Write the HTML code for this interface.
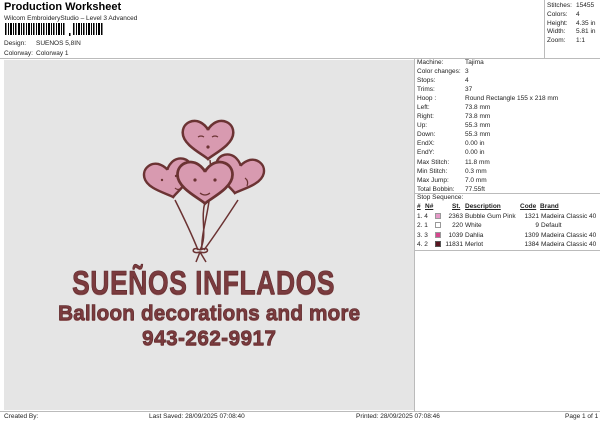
<!DOCTYPE html>
<html><head><meta charset="utf-8"><style>
*{margin:0;padding:0;box-sizing:border-box}
body{width:600px;height:424px;background:#fff;font-family:"Liberation Sans",Arial,sans-serif;font-size:6.5px;color:#222;position:relative;overflow:hidden}
.a{position:absolute;white-space:nowrap}
.big{position:absolute;font-weight:bold;color:#7b3b3e;white-space:nowrap;-webkit-text-stroke:0.6px #5a2a2c;text-shadow:0 1px 0 #a06a6a}
</style></head><body>
<div class="a" style="left:4px;top:1px;font-size:11px;font-weight:bold;color:#000">Production Worksheet</div>
<div class="a" style="left:4px;top:15px;font-size:6.5px">Wilcom EmbroideryStudio – Level 3 Advanced</div>
<svg class="a" style="left:5px;top:23px" width="100" height="14">
<g fill="#000">
<rect x="0" y="0" width="1.5" height="12"/><rect x="3" y="0" width="1" height="12"/><rect x="5" y="0" width="2" height="12"/><rect x="8" y="0" width="1" height="12"/><rect x="10" y="0" width="1.5" height="12"/><rect x="13" y="0" width="2" height="12"/><rect x="16" y="0" width="1" height="12"/><rect x="18" y="0" width="1.5" height="12"/><rect x="21" y="0" width="1" height="12"/><rect x="23" y="0" width="2" height="12"/><rect x="26" y="0" width="1" height="12"/><rect x="28" y="0" width="1.5" height="12"/><rect x="31" y="0" width="1" height="12"/><rect x="33" y="0" width="2" height="12"/><rect x="36" y="0" width="1" height="12"/><rect x="38" y="0" width="1.5" height="12"/><rect x="41" y="0" width="1" height="12"/><rect x="43" y="0" width="2" height="12"/><rect x="46" y="0" width="1" height="12"/><rect x="48" y="0" width="1.5" height="12"/><rect x="51" y="0" width="1" height="12"/><rect x="53" y="0" width="2" height="12"/><rect x="56" y="0" width="1" height="12"/><rect x="58" y="0" width="1.5" height="12"/>
<rect x="64" y="10" width="1.5" height="3"/>
<rect x="68" y="0" width="1.5" height="12"/><rect x="71" y="0" width="1" height="12"/><rect x="73" y="0" width="2" height="12"/><rect x="76" y="0" width="1" height="12"/><rect x="78" y="0" width="1.5" height="12"/><rect x="81" y="0" width="1" height="12"/><rect x="83" y="0" width="2" height="12"/><rect x="86" y="0" width="1" height="12"/><rect x="88" y="0" width="1.5" height="12"/><rect x="91" y="0" width="1" height="12"/><rect x="93" y="0" width="2" height="12"/><rect x="96" y="0" width="1.5" height="12"/>
</g></svg>
<div class="a" style="left:4px;top:40px">Design:</div><div class="a" style="left:36px;top:40px">SUENOS 5,8IN</div>
<div class="a" style="left:4px;top:50px">Colorway:</div><div class="a" style="left:36px;top:50px">Colorway 1</div>
<div class="a" style="left:0;top:58px;width:600px;border-top:1px solid #bbb"></div>
<div class="a" style="left:544px;top:0;height:58px;border-left:1px solid #bbb"></div>
<div class="a" style="left:547px;top:2px;line-height:8.8px">Stitches:<br>Colors:<br>Height:<br>Width:<br>Zoom:</div>
<div class="a" style="left:576px;top:2px;line-height:8.8px">15455<br>4<br>4.35 in<br>5.81 in<br>1:1</div>
<div class="a" style="left:4px;top:60px;width:410px;height:350px;background:#e5e5e5"></div>
<div class="a" style="left:414px;top:58px;height:353px;border-left:1px solid #bbb"></div>
<div class="a" style="left:417px;top:58px;line-height:9.05px">Machine:<br>Color changes:<br>Stops:<br>Trims:<br>Hoop :<br>Left:<br>Right:<br>Up:<br>Down:<br>EndX:<br>EndY:<br>Max Stitch:<br>Min Stitch:<br>Max Jump:<br>Total Bobbin:</div>
<div class="a" style="left:465px;top:58px;line-height:9.05px">Tajima<br>3<br>4<br>37<br>Round Rectangle 155 x 218 mm<br>73.8 mm<br>73.8 mm<br>55.3 mm<br>55.3 mm<br>0.00 in<br>0.00 in<br>11.8 mm<br>0.3 mm<br>7.0 mm<br>77.55ft</div>
<div class="a" style="left:415px;top:193px;width:185px;border-top:1px solid #bbb"></div>
<div class="a" style="left:417px;top:194px">Stop Sequence:</div>
<div class="a" style="left:417px;top:203px;font-weight:bold;text-decoration:underline">#</div>
<div class="a" style="left:425px;top:203px;font-weight:bold;text-decoration:underline">N#</div>
<div class="a" style="left:452px;top:203px;font-weight:bold;text-decoration:underline">St.</div>
<div class="a" style="left:465px;top:203px;font-weight:bold;text-decoration:underline">Description</div>
<div class="a" style="left:520px;top:203px;font-weight:bold;text-decoration:underline">Code</div>
<div class="a" style="left:540px;top:203px;font-weight:bold;text-decoration:underline">Brand</div>
<div class="a" style="left:417px;top:212px;line-height:9.4px">1. 4<br>2. 1<br>3. 3<br>4. 2</div>
<div class="a" style="left:435px;top:213px;width:6px;height:6px;background:#e59ac8;border:1px solid #999"></div>
<div class="a" style="left:435px;top:222px;width:6px;height:6px;background:#fff;border:1px solid #999"></div>
<div class="a" style="left:435px;top:232px;width:6px;height:6px;background:#d5478e;border:1px solid #999"></div>
<div class="a" style="left:435px;top:241px;width:6px;height:6px;background:#5a1622;border:1px solid #555"></div>
<div class="a" style="left:443px;top:212px;width:20px;text-align:right;line-height:9.4px">2363<br>220<br>1039<br>11831</div>
<div class="a" style="left:465px;top:212px;line-height:9.4px">Bubble Gum Pink<br>White<br>Dahlia<br>Merlot</div>
<div class="a" style="left:515px;top:212px;width:24px;text-align:right;line-height:9.4px">1321<br>9<br>1309<br>1384</div>
<div class="a" style="left:541px;top:212px;line-height:9.4px">Madeira Classic 40<br>Default<br>Madeira Classic 40<br>Madeira Classic 40</div>
<div class="a" style="left:415px;top:250px;width:185px;border-top:1px solid #bbb"></div>
<div class="a" style="left:0;top:411px;width:600px;border-top:1px solid #bbb"></div>
<div class="a" style="left:4px;top:413px">Created By:</div>
<div class="a" style="left:149px;top:413px">Last Saved: 28/09/2025 07:08:40</div>
<div class="a" style="left:356px;top:413px">Printed: 28/09/2025 07:08:46</div>
<div class="a" style="left:565px;top:413px">Page 1 of 1</div>
<svg class="a" style="left:120px;top:110px" width="160" height="160" viewBox="0 0 160 160">
<defs><path id="h" d="M0,14 C-4,10 -22,2 -22,-9 C-22,-18 -12,-22 -5,-17 C-2,-15 0,-12 0,-11 C0,-12 2,-15 5,-17 C12,-22 22,-18 22,-9 C22,2 4,10 0,14Z"/></defs>
<g fill="none" stroke="#6b3333" stroke-width="1.5">
<path d="M55,90 C65,110 72,125 78,140"/><path d="M85,92 C80,110 88,125 80,140"/><path d="M118,90 C105,110 95,125 84,140"/><path d="M90,50 C95,90 80,120 82,140"/>
<path d="M80,140 C72,135 70,145 80,142 C90,145 90,135 80,140 M80,142 L76,152 M80,142 L86,152"/>
</g>
<g stroke="#6b3333" stroke-width="2.2" fill="#d89ab0">
<use href="#h" transform="translate(88,33) scale(1.15)"/>
<use href="#h" transform="translate(118,68) scale(1.1) rotate(12)"/>
<use href="#h" transform="translate(50,72) scale(1.1) rotate(-12)"/>
<use href="#h" transform="translate(85,76) scale(1.25)"/>
</g>
<g fill="#6b3333"><circle cx="75" cy="70" r="1.6"/><circle cx="95" cy="70" r="1.6"/><circle cx="42" cy="70" r="1.2"/><circle cx="56" cy="66" r="1.2"/><circle cx="88" cy="37" r="1.6"/></g>
<g fill="none" stroke="#6b3333" stroke-width="1.2"><path d="M80,83 Q85,87 90,83"/><path d="M78,27 q3,-2 6,0 M92,27 q3,-2 6,0"/><path d="M125,68 q4,3 2,8"/><path d="M55,78 q3,3 6,0"/></g>
</svg>
<div class="big" style="left:72px;top:264px;font-size:33px;letter-spacing:0.5px;transform:scaleX(0.81);transform-origin:0 0">SUEÑOS INFLADOS</div>
<div class="big" style="left:58px;top:302px;font-size:21px">Balloon decorations and more</div>
<div class="big" style="left:142px;top:327px;font-size:21px;letter-spacing:0.3px">943-262-9917</div>
</body></html>
